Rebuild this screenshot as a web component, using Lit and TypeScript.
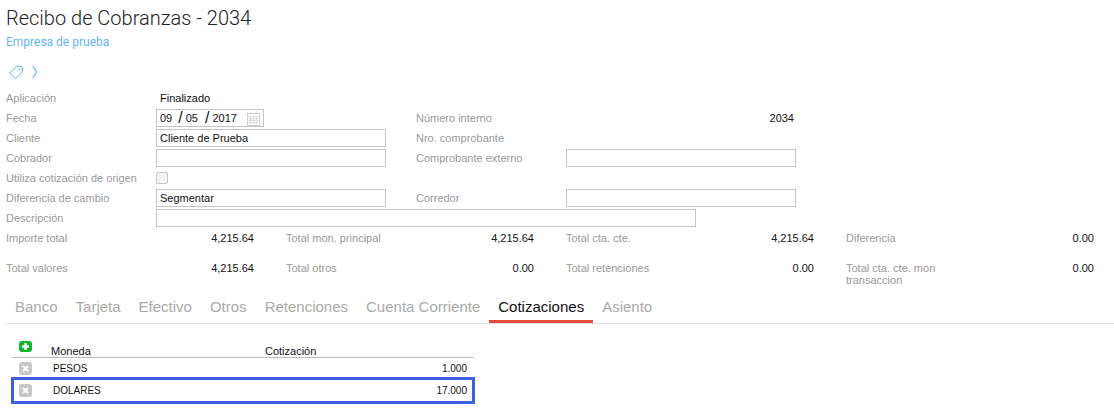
import { LitElement, html, css, svg } from "lit";
import { customElement } from "lit/decorators.js";

const totals = [
  ["Importe total", "4,215.64"],
  ["Total mon. principal", "4,215.64"],
  ["Total cta. cte.", "4,215.64"],
  ["Diferencia", "0.00"],
  ["Total valores", "4,215.64"],
  ["Total otros", "0.00"],
  ["Total retenciones", "0.00"],
  ["Total cta. cte. mon transaccion", "0.00"],
];

const tabs = ["Banco", "Tarjeta", "Efectivo", "Otros", "Retenciones", "Cuenta Corriente", "Cotizaciones", "Asiento"];

const tagIcon = svg`<path d="M0.8 8 L7.5 1.3 H12.2 Q13.2 1.3 13.2 2.3 V7 L6.5 13.7 Z" fill="none" stroke="#5aaef5" stroke-width="1" stroke-linejoin="round"/><rect x="9.5" y="3.5" width="1.5" height="1.5" fill="#5aaef5"/>`;

const calIcon = svg`<rect x="0.5" y="2.5" width="12" height="12" fill="none" stroke="#d0d0d0"/><path d="M0.5 5.5 H12.5 M2 7.5 H11 M2 9.5 H11 M2 11.5 H11 M3.5 6 V13 M6.5 6 V13 M9.5 6 V13 M3.5 0.5 V3 M9.5 0.5 V3" stroke="#dcdcdc" stroke-width="1" fill="none"/>`;

@customElement("app-root")
export class AppRoot extends LitElement {
  static styles = css`
    :host {
      display: block;
      width: 1114px;
      height: 409px;
      overflow: hidden;
      background: #fff;
      font-family: "Liberation Sans", Arial, sans-serif;
      font-size: 11px;
      color: #111;
    }
    .header {
      padding: 5px 0 0 6px;
    }
    h1 {
      margin: 0;
      font-family: Roboto, sans-serif;
      font-weight: 300;
      font-size: 20px;
      line-height: 26px;
      color: #222;
    }
    .company {
      margin-top: 3px;
      font-family: Roboto, sans-serif;
      font-size: 12px;
      line-height: 16px;
      color: #64b5f6;
    }
    .icons {
      display: flex;
      align-items: center;
      gap: 9px;
      height: 18px;
      margin-top: 13px;
      padding-left: 3px;
    }
    .icons svg {
      display: block;
    }
    .form {
      display: grid;
      grid-template-columns: 150px 260px 150px 230px;
      grid-auto-rows: 20px;
      align-items: center;
      margin-top: 7px;
      padding-left: 6px;
    }
    .label {
      color: #999;
    }
    .value {
      padding-left: 4px;
    }
    .num {
      text-align: right;
      padding-right: 2px;
      width: 230px;
      box-sizing: border-box;
    }
    .field {
      box-sizing: border-box;
      width: 230px;
      height: 18px;
      border: 1px solid #c4c4c4;
      padding: 0 3px;
      line-height: 16px;
      background: #fff;
    }
    .field.date {
      width: 108px;
      display: flex;
      align-items: center;
      justify-content: space-between;
      padding-right: 3px;
    }
    .field.wide {
      width: 540px;
      grid-column: 2 / 5;
    }
    .date-parts {
      display: flex;
      align-items: center;
    }
    .date-parts i {
      font-style: normal;
      font-size: 16px;
      margin: 0 3px 0 6px;
    }
    .date-parts i + span + i {
      margin-left: 7px;
    }
    .check {
      box-sizing: border-box;
      width: 12px;
      height: 12px;
      border: 1px solid #c8c8c8;
      border-radius: 2px;
      background: #f4f4f4;
    }
    .totals {
      display: grid;
      grid-template-columns: repeat(4, 248px);
      column-gap: 32px;
      grid-template-rows: 30px 30px;
      padding-left: 6px;
    }
    .total {
      display: flex;
      justify-content: space-between;
      line-height: 12px;
      padding-top: 4px;
    }
    .total .label {
      width: 130px;
    }
    .tabs {
      display: flex;
      height: 30px;
      margin: 5px 0 0 6px;
      width: 1108px;
      border-bottom: 1px solid #ddd;
      box-sizing: content-box;
    }
    .tab {
      box-sizing: border-box;
      height: 30px;
      padding: 0 9px;
      font-size: 15px;
      line-height: 27px;
      color: #aaa;
    }
    .tab.active {
      color: #111;
      border-bottom: 3px solid #e74c3c;
    }
    .table {
      width: 462px;
      margin: 17px 0 0 12px;
    }
    .row {
      display: grid;
      grid-template-columns: 39px 214px 1fr;
      align-items: center;
      box-sizing: border-box;
    }
    .row.head {
      height: 17px;
      border-bottom: 1px solid #bbb;
    }
    .row.head span {
      padding-top: 3px;
    }
    .row.body {
      height: 20px;
      font-size: 10px;
    }
    .row.selected {
      outline: 3px solid #3f5fe0;
      outline-offset: -2px;
      height: 25px;
    }
    .cell-name {
      padding-left: 2px;
    }
    .cell-num {
      grid-column: 3;
      text-align: right;
      padding-right: 7px;
    }
    .btn {
      width: 13px;
      height: 13px;
      margin-left: 7px;
      border-radius: 3px;
      display: flex;
      align-items: center;
      justify-content: center;
      background: #c8c8c8;
    }
    .btn.add {
      background: #11b52c;
      margin-top: -6px;
      height: 11px;
    }
  `;

  render() {
    return html`
      <div class="header">
        <h1>Recibo de Cobranzas - 2034</h1>
        <div class="company">Empresa de prueba</div>
        <div class="icons">
          <svg width="14" height="15" viewBox="0 0 14 15">${tagIcon}</svg>
          <svg width="6" height="14" viewBox="0 0 6 14"><path d="M1 1 L4.5 7 L1 13" fill="none" stroke="#5aaef5" stroke-width="1.1"/></svg>
        </div>
      </div>

      <div class="form">
        <span class="label">Aplicación</span>
        <span class="value">Finalizado</span>
        <span></span><span></span>

        <span class="label">Fecha</span>
        <div class="field date">
          <span class="date-parts"><span>09</span><i>/</i><span>05</span><i>/</i><span>2017</span></span>
          <svg width="13" height="15" viewBox="0 0 13 15">${calIcon}</svg>
        </div>
        <span class="label">Número interno</span>
        <span class="num">2034</span>

        <span class="label">Cliente</span>
        <div class="field">Cliente de Prueba</div>
        <span class="label">Nro. comprobante</span>
        <span></span>

        <span class="label">Cobrador</span>
        <div class="field"></div>
        <span class="label">Comprobante externo</span>
        <div class="field"></div>

        <span class="label">Utiliza cotización de origen</span>
        <div class="check"></div>
        <span></span><span></span>

        <span class="label">Diferencia de cambio</span>
        <div class="field">Segmentar</div>
        <span class="label">Corredor</span>
        <div class="field"></div>

        <span class="label">Descripción</span>
        <div class="field wide"></div>
      </div>

      <div class="totals">
        ${totals.map(
          ([label, value]) => html`<div class="total"><span class="label">${label}</span><span>${value}</span></div>`
        )}
      </div>

      <div class="tabs">
        ${tabs.map((t) => html`<div class="tab ${t === "Cotizaciones" ? "active" : ""}">${t}</div>`)}
      </div>

      <div class="table">
        <div class="row head">
          <div class="btn add">
            <svg width="9" height="9" viewBox="0 0 9 9"><path d="M4.5 1 V8 M1 4.5 H8" stroke="#fff" stroke-width="2.4"/></svg>
          </div>
          <span>Moneda</span>
          <span>Cotización</span>
        </div>
        ${[["PESOS", "1.000", false], ["DOLARES", "17.000", true]].map(
          ([name, rate, selected]) => html`
            <div class="row body ${selected ? "selected" : ""}">
              <div class="btn">
                <svg width="7" height="7" viewBox="0 0 7 7"><path d="M1 1 L6 6 M6 1 L1 6" stroke="#fff" stroke-width="1.8"/></svg>
              </div>
              <span class="cell-name">${name}</span>
              <span class="cell-num">${rate}</span>
            </div>
          `
        )}
      </div>
    `;
  }
}
